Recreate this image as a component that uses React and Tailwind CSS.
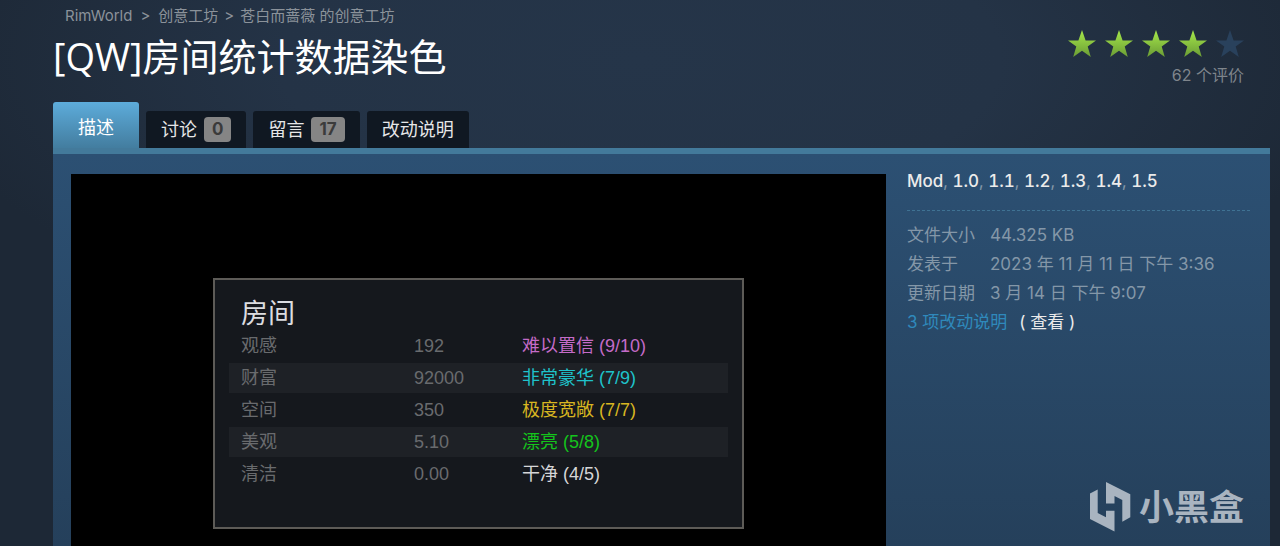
const tabs = [
  { label: "描述", active: true },
  { label: "讨论", count: 0 },
  { label: "留言", count: 17 },
  { label: "改动说明" },
];

const tags = ["Mod", "1.0", "1.1", "1.2", "1.3", "1.4", "1.5"];

const details = [
  ["文件大小", "44.325 KB"],
  ["发表于", "2023 年 11 月 11 日 下午 3:36"],
  ["更新日期", "3 月 14 日 下午 9:07"],
];

const stats = [
  { name: "观感", value: "192", rating: "难以置信 (9/10)", color: "text-[#c46bc8]" },
  { name: "财富", value: "92000", rating: "非常豪华 (7/9)", color: "text-[#1fc3cb]" },
  { name: "空间", value: "350", rating: "极度宽敞 (7/7)", color: "text-[#d8b621]" },
  { name: "美观", value: "5.10", rating: "漂亮 (5/8)", color: "text-[#14c41c]" },
  { name: "清洁", value: "0.00", rating: "干净 (4/5)", color: "text-[#d5d6d8]" },
];

function Star({ filled }) {
  return (
    <svg viewBox="0 0 28 27" className="w-7 h-[27px]" aria-hidden="true">
      <defs>
        <linearGradient id="starFill" x1="0" y1="0" x2="0" y2="1">
          <stop offset="0" stopColor="#a6e84a" />
          <stop offset="1" stopColor="#6a9c35" />
        </linearGradient>
      </defs>
      <path
        d="M14 0L17.6 10.4H28L19.7 16.6L22.8 27L14 20.7L5.2 27L8.3 16.6L0 10.4H10.4Z"
        fill={filled ? "url(#starFill)" : "#29415c"}
      />
    </svg>
  );
}

function Header() {
  return (
    <header className="flex justify-between pr-[26px]">
      <div>
        <nav className="flex pl-3 pt-1 text-[15px] leading-6 text-[#8b929a]">
          <a href="#game">RimWorld</a>
          <span className="px-2">&gt;</span>
          <a href="#workshop">创意工坊</a>
          <span className="px-1.5">&gt;</span>
          <a href="#author">苍白而蔷薇 的创意工坊</a>
        </nav>
        <h1 className="text-[38px] leading-[56px] text-white font-['Open_Sans','Noto_Sans_CJK_SC',sans-serif]">
          [QW]房间统计数据染色
        </h1>
      </div>
      <div className="flex flex-col items-end pt-[30px]">
        <div className="flex gap-[9px]" role="img" aria-label="4 / 5">
          {[1, 2, 3, 4, 5].map((n) => (
            <Star key={n} filled={n < 5} />
          ))}
        </div>
        <div className="pt-1.5 text-[16px] leading-6 text-[#7f858c]">62 个评价</div>
      </div>
    </header>
  );
}

function Tabs() {
  return (
    <div className="flex items-end gap-[7px] pt-[15px] text-[18px]">
      {tabs.map((tab) =>
        tab.active ? (
          <button
            key={tab.label}
            className="h-[46px] px-[25px] pt-1 rounded-t-[3px] bg-linear-to-b from-[#5dacdb] to-[#437d9f] text-white"
          >
            {tab.label}
          </button>
        ) : (
          <button
            key={tab.label}
            className="flex items-center gap-[7px] h-[37px] px-[15px] rounded-t-[3px] bg-[#101822] text-[#e6e7e8]"
          >
            {tab.label}
            {tab.count !== undefined && (
              <span className="h-[25px] px-2 rounded bg-[#858585] text-[17px] leading-[25px] font-bold text-[#3b3b3b]">
                {tab.count}
              </span>
            )}
          </button>
        )
      )}
    </div>
  );
}

function RoomCard() {
  return (
    <div className="w-[531px] h-[251px] border-2 border-[#5d5b57] bg-[#15181d] px-3.5 pt-[19px] font-['Liberation_Sans','Noto_Sans_CJK_SC',sans-serif]">
      <h2 className="pl-3 text-[27px] leading-[30px] text-[#dcdde0]">房间</h2>
      <table className="w-full table-fixed border-separate border-spacing-x-0 border-spacing-y-[2px] text-[18px] leading-[30px] text-left">
        <tbody>
          {stats.map((row) => (
            <tr key={row.name} className="even:bg-[#1e2126]">
              <th scope="row" className="w-[185px] p-0 pl-3 font-normal text-[#696b6e]">{row.name}</th>
              <td className="w-[108px] p-0 text-[#696b6e]">{row.value}</td>
              <td className={`p-0 ${row.color}`}>{row.rating}</td>
            </tr>
          ))}
        </tbody>
      </table>
    </div>
  );
}

function Sidebar() {
  return (
    <aside className="flex-1 min-w-0 text-[17px] text-[#8497a8]">
      <div className="pb-[17px] leading-6 -mt-[5px] border-b border-dashed border-[#3f7293] tabular-nums">
        {tags.map((tag, i) => (
          <span key={tag}>
            {i > 0 && ", "}
            <a href={`#tag-${tag}`} className="font-medium text-[#ebebeb]">{tag}</a>
          </span>
        ))}
      </div>
      <dl className="grid grid-cols-[83px_1fr] pt-2.5 leading-[29px]">
        {details.map(([label, value]) => (
          <div key={label} className="contents">
            <dt>{label}</dt>
            <dd>{value}</dd>
          </div>
        ))}
      </dl>
      <div className="flex gap-3 leading-[29px]">
        <span className="text-[#2f89bc]">3 项改动说明</span>
        <a href="#changelog" className="text-[#ebebeb]">( 查看 )</a>
      </div>
    </aside>
  );
}

function Watermark() {
  return (
    <div className="absolute right-[26px] bottom-3.5 flex items-center gap-2 text-[#a9b4c0]">
      <svg viewBox="0 0 42 50" className="w-[42px] h-[50px]" fill="currentColor" aria-hidden="true">
        <path d="M1 11.500L8.700 7.500V31L17 35.300V28.700H25.500V49.500L1 37Z" />
        <path d="M17 0L41.300 12.300V35.300L33.300 39.700V18L25.500 14V21.500H17Z" />
      </svg>
      <span className="text-[35px] leading-[50px] font-bold">小黑盒</span>
    </div>
  );
}

export default function App() {
  return (
    <div className="min-h-screen flex flex-col pl-[53px] pr-2.5 bg-[#1c2735] bg-[radial-gradient(ellipse_720px_300px_at_50%_60px,#253549_0%,#243346_50%,#1d2836_100%)] font-[Inter,'Noto_Sans_CJK_SC',sans-serif]">
      <Header />
      <Tabs />
      <main className="relative grow flex gap-[21px] pl-[18px] pr-5 pt-5 border-t-[6px] border-[#437a9b] bg-linear-to-b from-[#2c5073] to-[#25405b]">
        <div className="flex-[0_1_815px] flex justify-center items-start pt-[104px] bg-black">
          <RoomCard />
        </div>
        <Sidebar />
        <Watermark />
      </main>
    </div>
  );
}
